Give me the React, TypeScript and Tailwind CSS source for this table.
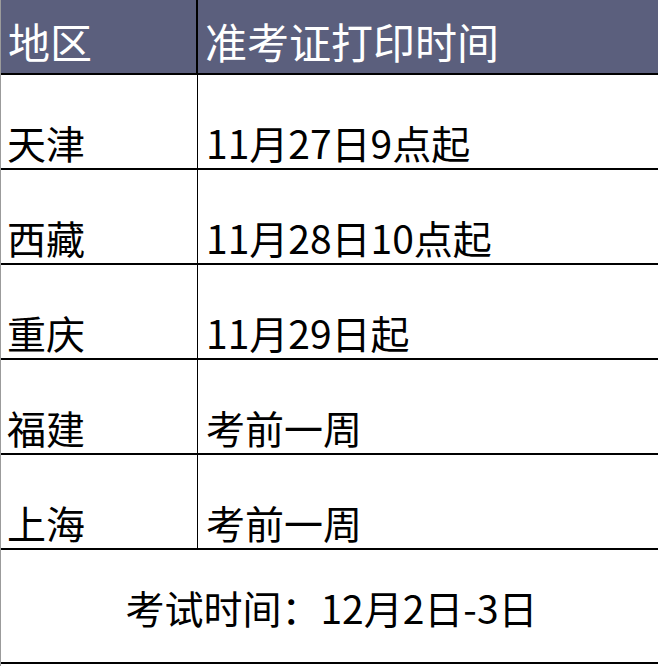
import React from 'react'

const rows = [
    { region: '天津', time: '11月27日9点起' },
    { region: '西藏', time: '11月28日10点起' },
    { region: '重庆', time: '11月29日起' },
    { region: '福建', time: '考前一周' },
    { region: '上海', time: '考前一周' },
]

export default function App() {
    return (
        <div
            className="w-[658px] h-[666px] bg-white border-l border-[#9b9b9b] text-black overflow-hidden"
            style={{ fontFamily: '"Noto Sans CJK SC", sans-serif' }}
        >
            {/* Header */}
            <div className="grid grid-cols-[197px_1fr] h-[75px] bg-[#5b5f7d] border-b-2 border-black text-white text-[42px] leading-none">
                <div className="flex items-center pl-[7px] pt-[8px] border-r-2 border-black">地区</div>
                <div className="flex items-center pl-[7px] pt-[8px]">准考证打印时间</div>
            </div>

            {/* Body */}
            {rows.map((r) => (
                <div key={r.region} className="grid grid-cols-[197px_1fr] h-[95px] border-b-2 border-black text-[39px] leading-none">
                    <div className="flex items-end pl-[6px] pb-[6px] border-r border-black">{r.region}</div>
                    <div className="flex items-end pl-[8px] pb-[6px]">{r.time}</div>
                </div>
            ))}

            {/* Footer */}
            <div className="h-[114px] border-b-2 border-black flex items-center justify-center text-[39px] leading-none pt-[2px] pl-[4px]">
                考试时间：12月2日-3日
            </div>
        </div>
    )
}
